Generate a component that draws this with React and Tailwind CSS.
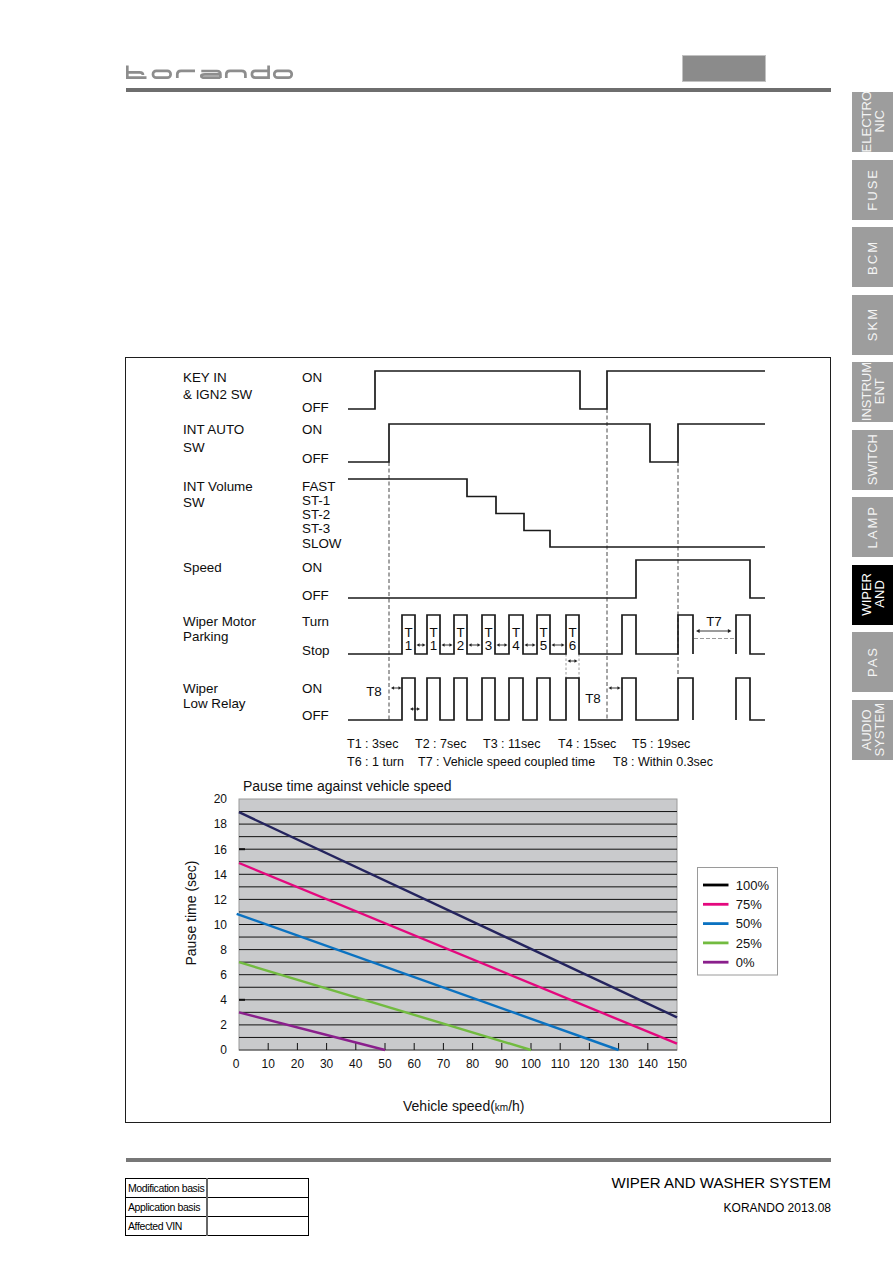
import React from 'react'

const tabs = [
  { lines: ['ELECTRO', 'NIC'] },
  { lines: ['FUSE'], spaced: true },
  { lines: ['BCM'], spaced: true },
  { lines: ['SKM'], spaced: true },
  { lines: ['INSTRUM', 'ENT'] },
  { lines: ['SWITCH'] },
  { lines: ['LAMP'], spaced: true },
  { lines: ['WIPER', 'AND'], active: true },
  { lines: ['PAS'], spaced: true },
  { lines: ['AUDIO', 'SYSTEM'] },
]

// rise / fall x of the wiper pulses
const pulses = [
  [402, 415], [427, 440], [454, 467], [482, 495], [509, 523],
  [537, 550], [566, 579], [622, 636], [678, 693], [736, 750],
]

function pulseTrain(lo, hi) {
  let d = `M348 ${lo}`
  pulses.forEach(([a, b], i) => {
    if (i === 9) d += ` M${a} ${lo} V${hi} H${b} V${lo} H765`
    else d += ` H${a} V${hi} H${b} V${lo}`
  })
  return d
}

function Arrow({ x1, x2, y, h = 1.7 }) {
  return (
    <g fill="#222">
      <line x1={x1 + h} y1={y} x2={x2 - h} y2={y} stroke="#222" strokeWidth="0.9" />
      <polygon points={`${x1},${y} ${x1 + h * 1.8},${y - h} ${x1 + h * 1.8},${y + h}`} />
      <polygon points={`${x2},${y} ${x2 - h * 1.8},${y - h} ${x2 - h * 1.8},${y + h}`} />
    </g>
  )
}

function Logo() {
  return (
    <svg width="168" height="16" viewBox="0 0 168 16" className="mt-[9px] ml-[1px]">
      <g fill="none" stroke="#8d8d8d" strokeWidth="2.7">
        <path d="M1.3 1.5 V13.7 H20.5" />
        <path d="M1.3 8.4 H13.5 Q17 8.4 17 11" />
        <rect x="27" y="6.8" width="17.6" height="6.9" rx="3.3" />
        <path d="M51.3 14 V10.3 Q51.3 6.8 55 6.8 H69" />
        <path d="M75.3 7 H91 Q94.4 7 94.4 10.3 V14 M94.4 13.7 H79 Q75.3 13.7 75.3 11.9 Q75.3 10.4 79 10.4 H94.4" />
        <path d="M100.3 14 V10.3 Q100.3 6.8 104 6.8 H115.5 Q119.4 6.8 119.4 10.3 V14" />
        <path d="M142.6 1.5 V13.7 H129.3 Q125.9 13.7 125.9 10.3 Q125.9 6.8 129.3 6.8 H142.6" />
        <rect x="148.3" y="6.8" width="17.4" height="6.9" rx="3.3" />
      </g>
    </svg>
  )
}

function TimingDiagram() {
  const left = [
    ['KEY IN', 381.5], ['& IGN2 SW', 398.5], ['INT AUTO', 434.3], ['SW', 451.7],
    ['INT Volume', 491], ['SW', 506.7], ['Speed', 571.5], ['Wiper Motor', 626],
    ['Parking', 641], ['Wiper', 692.7], ['Low Relay', 707.7],
  ]
  const states = [
    ['ON', 381.5], ['OFF', 411.5], ['ON', 434.3], ['OFF', 463.3], ['FAST', 491],
    ['ST-1', 505], ['ST-2', 519], ['ST-3', 533.3], ['SLOW', 547.7], ['ON', 571.5],
    ['OFF', 600], ['Turn', 626], ['Stop', 655], ['ON', 692.7], ['OFF', 720],
  ]
  const tags = ['1', '1', '2', '3', '4', '5', '6']
  return (
    <svg width="704" height="414" viewBox="126 358 704 414" className="block">
      <g fontSize="13.4" fill="#0d0d0d">
        {left.map(([t, y], i) => (
          <text key={i} x="183" y={y}>{t}</text>
        ))}
        {states.map(([t, y], i) => (
          <text key={i} x="302" y={y}>{t}</text>
        ))}
      </g>

      <g fill="none" stroke="#333" strokeWidth="0.9" strokeDasharray="4 2.5">
        <line x1="389" y1="462" x2="389" y2="720" />
        <line x1="607" y1="409" x2="607" y2="720" />
        <line x1="678" y1="462" x2="678" y2="676" />
      </g>
      <g fill="none" stroke="#9a9a9a" strokeWidth="1" strokeDasharray="2.5 2">
        <line x1="566" y1="654" x2="566" y2="678" />
        <line x1="579" y1="654" x2="579" y2="678" />
        <line x1="694" y1="638.5" x2="735" y2="638.5" strokeDasharray="4 2" />
      </g>

      <g fill="none" stroke="#1a1a1a" strokeWidth="1.7">
        <path d="M348 409 H375 V371 H580 V409 H607 V371 H765" />
        <path d="M348 462 H389 V424 H650 V462 H678 V424 H765" />
        <path d="M348 479 H467 V496.5 H496 V513.5 H524 V530.5 H550 V547 H765" />
        <path d="M348 598 H636 V560 H750 V598 H765" />
        <path d={pulseTrain(654, 615)} />
        <path d={pulseTrain(720, 678)} />
      </g>

      <g fontSize="13.4" fill="#0d0d0d" textAnchor="middle">
        {tags.map((n, i) => {
          const cx = (pulses[i][0] + pulses[i][1]) / 2
          return (
            <g key={i}>
              <text x={cx} y="636.7">T</text>
              <text x={cx} y="650">{n}</text>
            </g>
          )
        })}
        <text x="374" y="696">T8</text>
        <text x="593" y="702.5">T8</text>
        <text x="714" y="626">T7</text>
      </g>

      {pulses.slice(0, 6).map(([, b], i) => (
        <Arrow key={i} x1={b + 1.5} x2={pulses[i + 1][0] - 1.5} y={645} />
      ))}
      <Arrow x1={567.5} x2={577.5} y={661} />
      <Arrow x1={391} x2={401.5} y={688} />
      <Arrow x1={410} x2={420} y={709} />
      <Arrow x1={608.5} x2={620.5} y={688} />
      <Arrow x1={696} x2={731.5} y={631} h={2} />

      <g fontSize="12.5" fill="#0d0d0d">
        <text x="347" y="748.3">T1 : 3sec</text>
        <text x="415" y="748.3">T2 : 7sec</text>
        <text x="483" y="748.3">T3 : 11sec</text>
        <text x="558" y="748.3">T4 : 15sec</text>
        <text x="632" y="748.3">T5 : 19sec</text>
        <text x="347" y="765.5">T6 : 1 turn</text>
        <text x="418" y="765.5">T7 : Vehicle speed coupled time</text>
        <text x="613" y="765.5">T8 : Within 0.3sec</text>
      </g>
    </svg>
  )
}

const X = (v) => 239 + (v * 438) / 150
const Y = (v) => 1050 - v * 12.55

const series = [
  { label: '100%', color: '#24245e', key: '#000', from: [0, 18.95], to: [150, 2.6] },
  { label: '75%', color: '#e4087e', key: '#e4087e', from: [0, 14.9], to: [150, 0.5] },
  { label: '50%', color: '#0b72c1', key: '#0b72c1', from: [-0.8, 10.85], to: [130, 0] },
  { label: '25%', color: '#72bb40', key: '#72bb40', from: [0, 7], to: [100, 0] },
  { label: '0%', color: '#8a1f8c', key: '#8a1f8c', from: [0, 3], to: [50, 0] },
]

function PauseChart() {
  const grid = Array.from({ length: 19 }, (_, i) => i + 1)
  const yTicks = [0, 2, 4, 6, 8, 10, 12, 14, 16, 18, 20]
  const xTicks = Array.from({ length: 16 }, (_, i) => i * 10)
  return (
    <svg width="704" height="350" viewBox="126 772 704 350" className="block">
      <text x="243" y="791" fontSize="14" fill="#111">Pause time against vehicle speed</text>

      <rect x="239" y="799" width="438" height="251" fill="#c9cacc" stroke="#9a9a9a" strokeWidth="1" />
      <g stroke="#111" strokeWidth="1">
        {grid.map((v) => (
          <line key={v} x1="239" y1={Y(v)} x2="677" y2={Y(v)} />
        ))}
        <line x1="239" y1="1050" x2="677" y2="1050" stroke="#444" />
        {xTicks.slice(1, 15).map((v) => (
          <line key={v} x1={X(v)} y1="1043" x2={X(v)} y2="1050" />
        ))}
        <line x1="239" y1={Y(16)} x2="245" y2={Y(16)} strokeWidth="2" />
        <line x1="239" y1={Y(4)} x2="245" y2={Y(4)} strokeWidth="2" />
      </g>

      <g strokeWidth="2.4" strokeLinecap="butt">
        {series.map((s) => (
          <line
            key={s.label}
            x1={X(s.from[0])}
            y1={Y(s.from[1])}
            x2={X(s.to[0])}
            y2={Y(s.to[1])}
            stroke={s.color}
          />
        ))}
      </g>

      <g fontSize="12" fill="#111">
        {yTicks.map((v) => (
          <text key={v} x="227" y={Y(v) + 4.3} textAnchor="end">{v}</text>
        ))}
        {xTicks.map((v) => (
          <text key={v} x={v === 0 ? X(0) - 3 : X(v)} y="1067.6" textAnchor="middle">{v}</text>
        ))}
      </g>

      <text
        x="195.7"
        y="913"
        fontSize="14"
        fill="#111"
        textAnchor="middle"
        transform="rotate(-90 195.7 913)"
      >
        Pause time (sec)
      </text>
      <text x="403" y="1111" fontSize="14" fill="#111">
        Vehicle speed(<tspan fontSize="10">km</tspan>/h)
      </text>

      <rect x="697.5" y="867.5" width="80" height="107.5" fill="#fff" stroke="#9a9a9a" strokeWidth="1" />
      {series.map((s, i) => {
        const y = 885 + i * 19.3
        return (
          <g key={s.label}>
            <line x1="703" y1={y} x2="728.5" y2={y} stroke={s.key} strokeWidth="2.8" />
            <text x="735.7" y={y + 4.7} fontSize="13" fill="#111">{s.label}</text>
          </g>
        )
      })}
    </svg>
  )
}

function SideTab({ tab }) {
  return (
    <div
      className={[
        'flex h-[60px] w-[41px] items-center justify-center',
        tab.active ? 'bg-black text-white' : 'bg-[#9d9d9d] text-[#f4f4f4]',
      ].join(' ')}
    >
      <div
        className={[
          '[writing-mode:vertical-rl] rotate-180 text-center text-[13px] leading-[13px]',
          tab.spaced ? 'tracking-[2px]' : '',
        ].join(' ')}
      >
        {tab.lines.map((line) => (
          <div key={line}>{line}</div>
        ))}
      </div>
    </div>
  )
}

export default function App() {
  const basis = ['Modification basis', 'Application basis', 'Affected VIN']

  return (
    <div className="flex min-h-[1263px] w-[893px] bg-white font-['Liberation_Sans',Arial,sans-serif] text-black">
      <div className="w-[831px] shrink-0 pl-[125px]">
        <header className="flex h-[88px] items-start justify-between pt-[55px]">
          <Logo />
          <div className="mr-[65px] h-[27px] w-[84px] border border-[#c2c2c2] bg-[#8b8b8b]" />
        </header>
        <div className="ml-[1px] h-[4px] bg-[#6e6e6e]" />

        <section className="mt-[265px] flex h-[766px] flex-col border border-[#1e1e1e]">
          <TimingDiagram />
          <PauseChart />
        </section>

        <div className="ml-[1px] mt-[35px] h-[4px] bg-[#777]" />

        <footer className="mt-[12px] flex items-start justify-between">
          <table className="mt-[4px] w-[184px] border-collapse text-[10.5px] tracking-[-0.4px]">
            <tbody>
              {basis.map((row) => (
                <tr key={row} className="h-[19px]">
                  <td className="w-[81px] border border-black border-r-2 border-r-[#666] pl-[2px] leading-none">
                    {row}
                  </td>
                  <td className="border border-black" />
                </tr>
              ))}
            </tbody>
          </table>
          <div className="flex flex-col items-end">
            <p className="text-[15px] leading-[18px]">WIPER AND WASHER SYSTEM</p>
            <p className="mt-[9px] text-[12px] leading-[14px]">KORANDO 2013.08</p>
          </div>
        </footer>
      </div>

      <aside className="ml-[21px] flex w-[41px] flex-col gap-[7.5px] pt-[92px]">
        {tabs.map((tab) => (
          <SideTab key={tab.lines.join('')} tab={tab} />
        ))}
      </aside>
    </div>
  )
}
